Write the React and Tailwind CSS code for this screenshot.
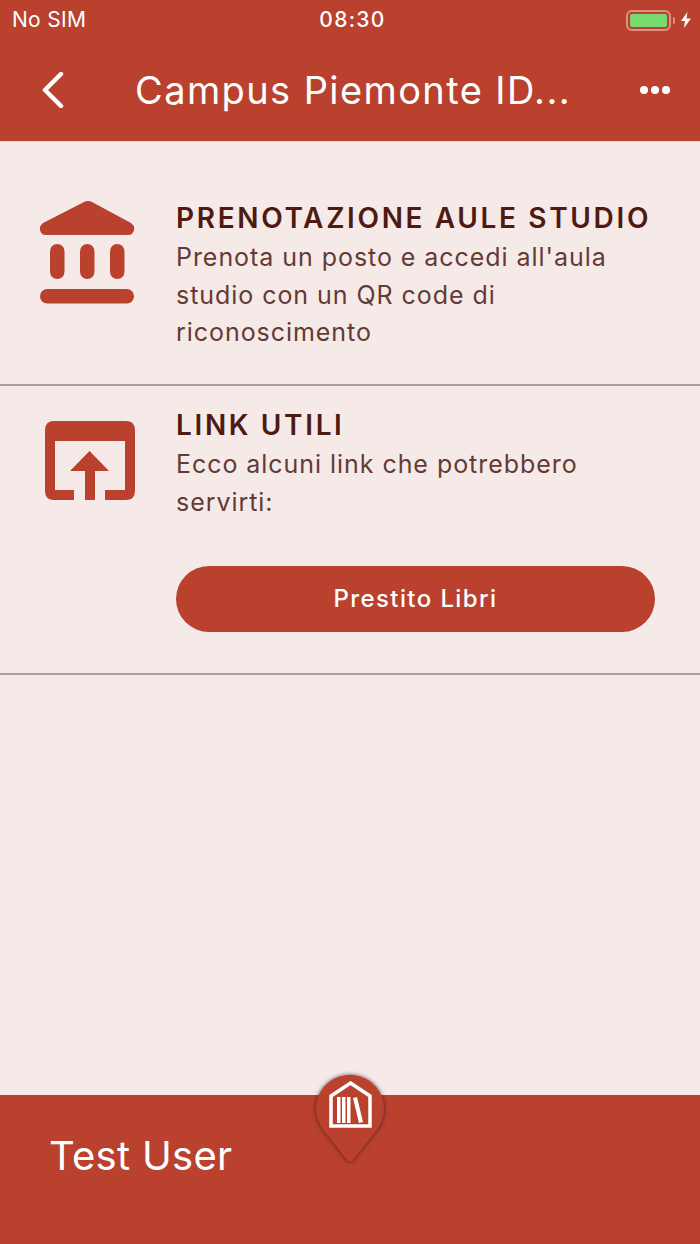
const BankIcon = () => (
    <svg width="96" height="106" viewBox="0 0 96 106" fill="#b9412e">
        <path d="M44 2 Q48 0 52 2 L91 23 Q95 26 94 30 Q93 35 88 35 L6 35 Q1 35 0 30 Q-1 26 3 23 Z" />
        <rect x="10" y="44" width="14.5" height="35" rx="7.25" />
        <rect x="40" y="44" width="14.5" height="35" rx="7.25" />
        <rect x="70" y="44" width="14.5" height="35" rx="7.25" />
        <rect x="0" y="89" width="94" height="14.5" rx="7.25" />
    </svg>
);

const OpenIcon = () => (
    <svg width="90" height="80" viewBox="0 0 90 80" fill="#b9412e">
        <path d="M9 0 H81 Q90 0 90 9 V70 Q90 79 81 79 H60 V69 H80 V20 H10 V69 H29 V79 H9 Q0 79 0 70 V9 Q0 0 9 0 Z" />
        <path d="M44.5 30 L64 50 H50 V79 H40 V50 H25 Z" />
    </svg>
);

const Pin = () => (
    <svg width="74" height="92" viewBox="0 0 74 92" className="drop-shadow-[0_0_2px_rgba(50,20,15,0.8)]">
        <path d="M37 2 C56 2 71 17 71 36 C71 45 68 51 63 58 L40 87 Q37 90 34 87 L11 58 C6 51 3 45 3 36 C3 17 18 2 37 2 Z" fill="#b9412e" />
        <path d="M37.5 10 L57 23 V53 H18 V23 Z" fill="none" stroke="#fff" strokeWidth="3.5" />
        <rect x="24" y="24" width="3.5" height="26" fill="#fff" />
        <rect x="29" y="24" width="3.5" height="26" fill="#fff" />
        <rect x="34" y="24" width="3.5" height="26" fill="#fff" />
        <path d="M40 25 L44 24 L50 49 L46 50 Z" fill="#fff" />
    </svg>
);

const StatusBar = () => (
    <div className="h-[40px] flex items-center justify-between pl-3 pr-[9px] text-white">
        <span className="text-[21px] w-[200px] tracking-[0.3px]">No SIM</span>
        <span className="text-[21px] font-medium tracking-[1.3px] pl-[2px]">08:30</span>
        <div className="w-[200px] flex items-center justify-end gap-[6px]">
            <div className="flex items-center gap-[2px]">
                <div className="w-[45px] h-[21px] p-[2px] rounded-[6px] border-2 border-[#dc9187]">
                    <div className="w-full h-full rounded-[2px] bg-[#77d96f]" />
                </div>
                <div className="w-[2px] h-[7px] rounded-r-sm bg-[#dc9187]" />
            </div>
            <svg width="10" height="16" viewBox="0 0 10 16" fill="#fff">
                <path d="M6.5 0 L0 9 H4 L3 16 L10 6.5 H5.5 Z" />
            </svg>
        </div>
    </div>
);

const Section = ({ icon, title, children, className }) => (
    <div className={`flex border-b-2 border-[#a9a09e] pl-10 pr-[45px] ${className}`}>
        <div className="w-[136px] shrink-0">{icon}</div>
        <div className="flex-1 min-w-0">
            <h2 className="text-[28px] leading-[34px] font-semibold tracking-[2.65px] text-[#4f1a12] whitespace-nowrap">{title}</h2>
            {children}
        </div>
    </div>
);

const Desc = ({ children }) => (
    <p className="mt-[4px] text-[25px] leading-[37.5px] tracking-[0.95px] text-[#643a35]">{children}</p>
);

export default function App() {
    return (
        <div className="relative w-[700px] h-[1244px] flex flex-col bg-[#f5eae8] font-['Inter',sans-serif] overflow-hidden">
            <header className="h-[142px] bg-[#b9412e] text-white shrink-0 border-b border-[#f0d5d0]">
                <StatusBar />
                <div className="flex items-center h-[100px]">
                    <svg width="24" height="36" viewBox="0 0 24 36" fill="none" stroke="#fff" strokeWidth="4.5" strokeLinecap="round" strokeLinejoin="round" className="ml-[41px] mr-[70px]">
                        <path d="M20 2 L4 18 L20 34" />
                    </svg>
                    <h1 className="text-[38px] tracking-[1.4px] leading-none whitespace-nowrap">Campus Piemonte ID...</h1>
                    <div className="ml-auto mr-[30px] flex gap-[3px]">
                        <span className="w-[8px] h-[8px] rounded-full bg-white" />
                        <span className="w-[8px] h-[8px] rounded-full bg-white" />
                        <span className="w-[8px] h-[8px] rounded-full bg-white" />
                    </div>
                </div>
            </header>

            <Section icon={<div className="mt-[-1px]"><BankIcon /></div>} title="PRENOTAZIONE AULE STUDIO" className="h-[244px] pt-[59px]">
                <Desc>Prenota un posto e accedi all'aula studio con un QR code di riconoscimento</Desc>
            </Section>

            <Section icon={<div className="ml-[5px] mt-[13px]"><OpenIcon /></div>} title="LINK UTILI" className="h-[289px] pt-[22px]">
                <Desc>Ecco alcuni link che potrebbero servirti:</Desc>
                <button className="mt-[45px] w-full h-[66px] rounded-full bg-[#b9412e] text-white text-[24px] font-medium tracking-[1.4px]">Prestito Libri</button>
            </Section>

            <div className="flex-1" />

            <footer className="h-[149px] bg-[#b9412e] text-white flex items-center pl-[49px] pb-[27px] shrink-0">
                <span className="text-[40px] tracking-[0.3px] leading-none">Test User</span>
            </footer>

            <div className="absolute left-[313px] top-[1073px]">
                <Pin />
            </div>
        </div>
    );
}
